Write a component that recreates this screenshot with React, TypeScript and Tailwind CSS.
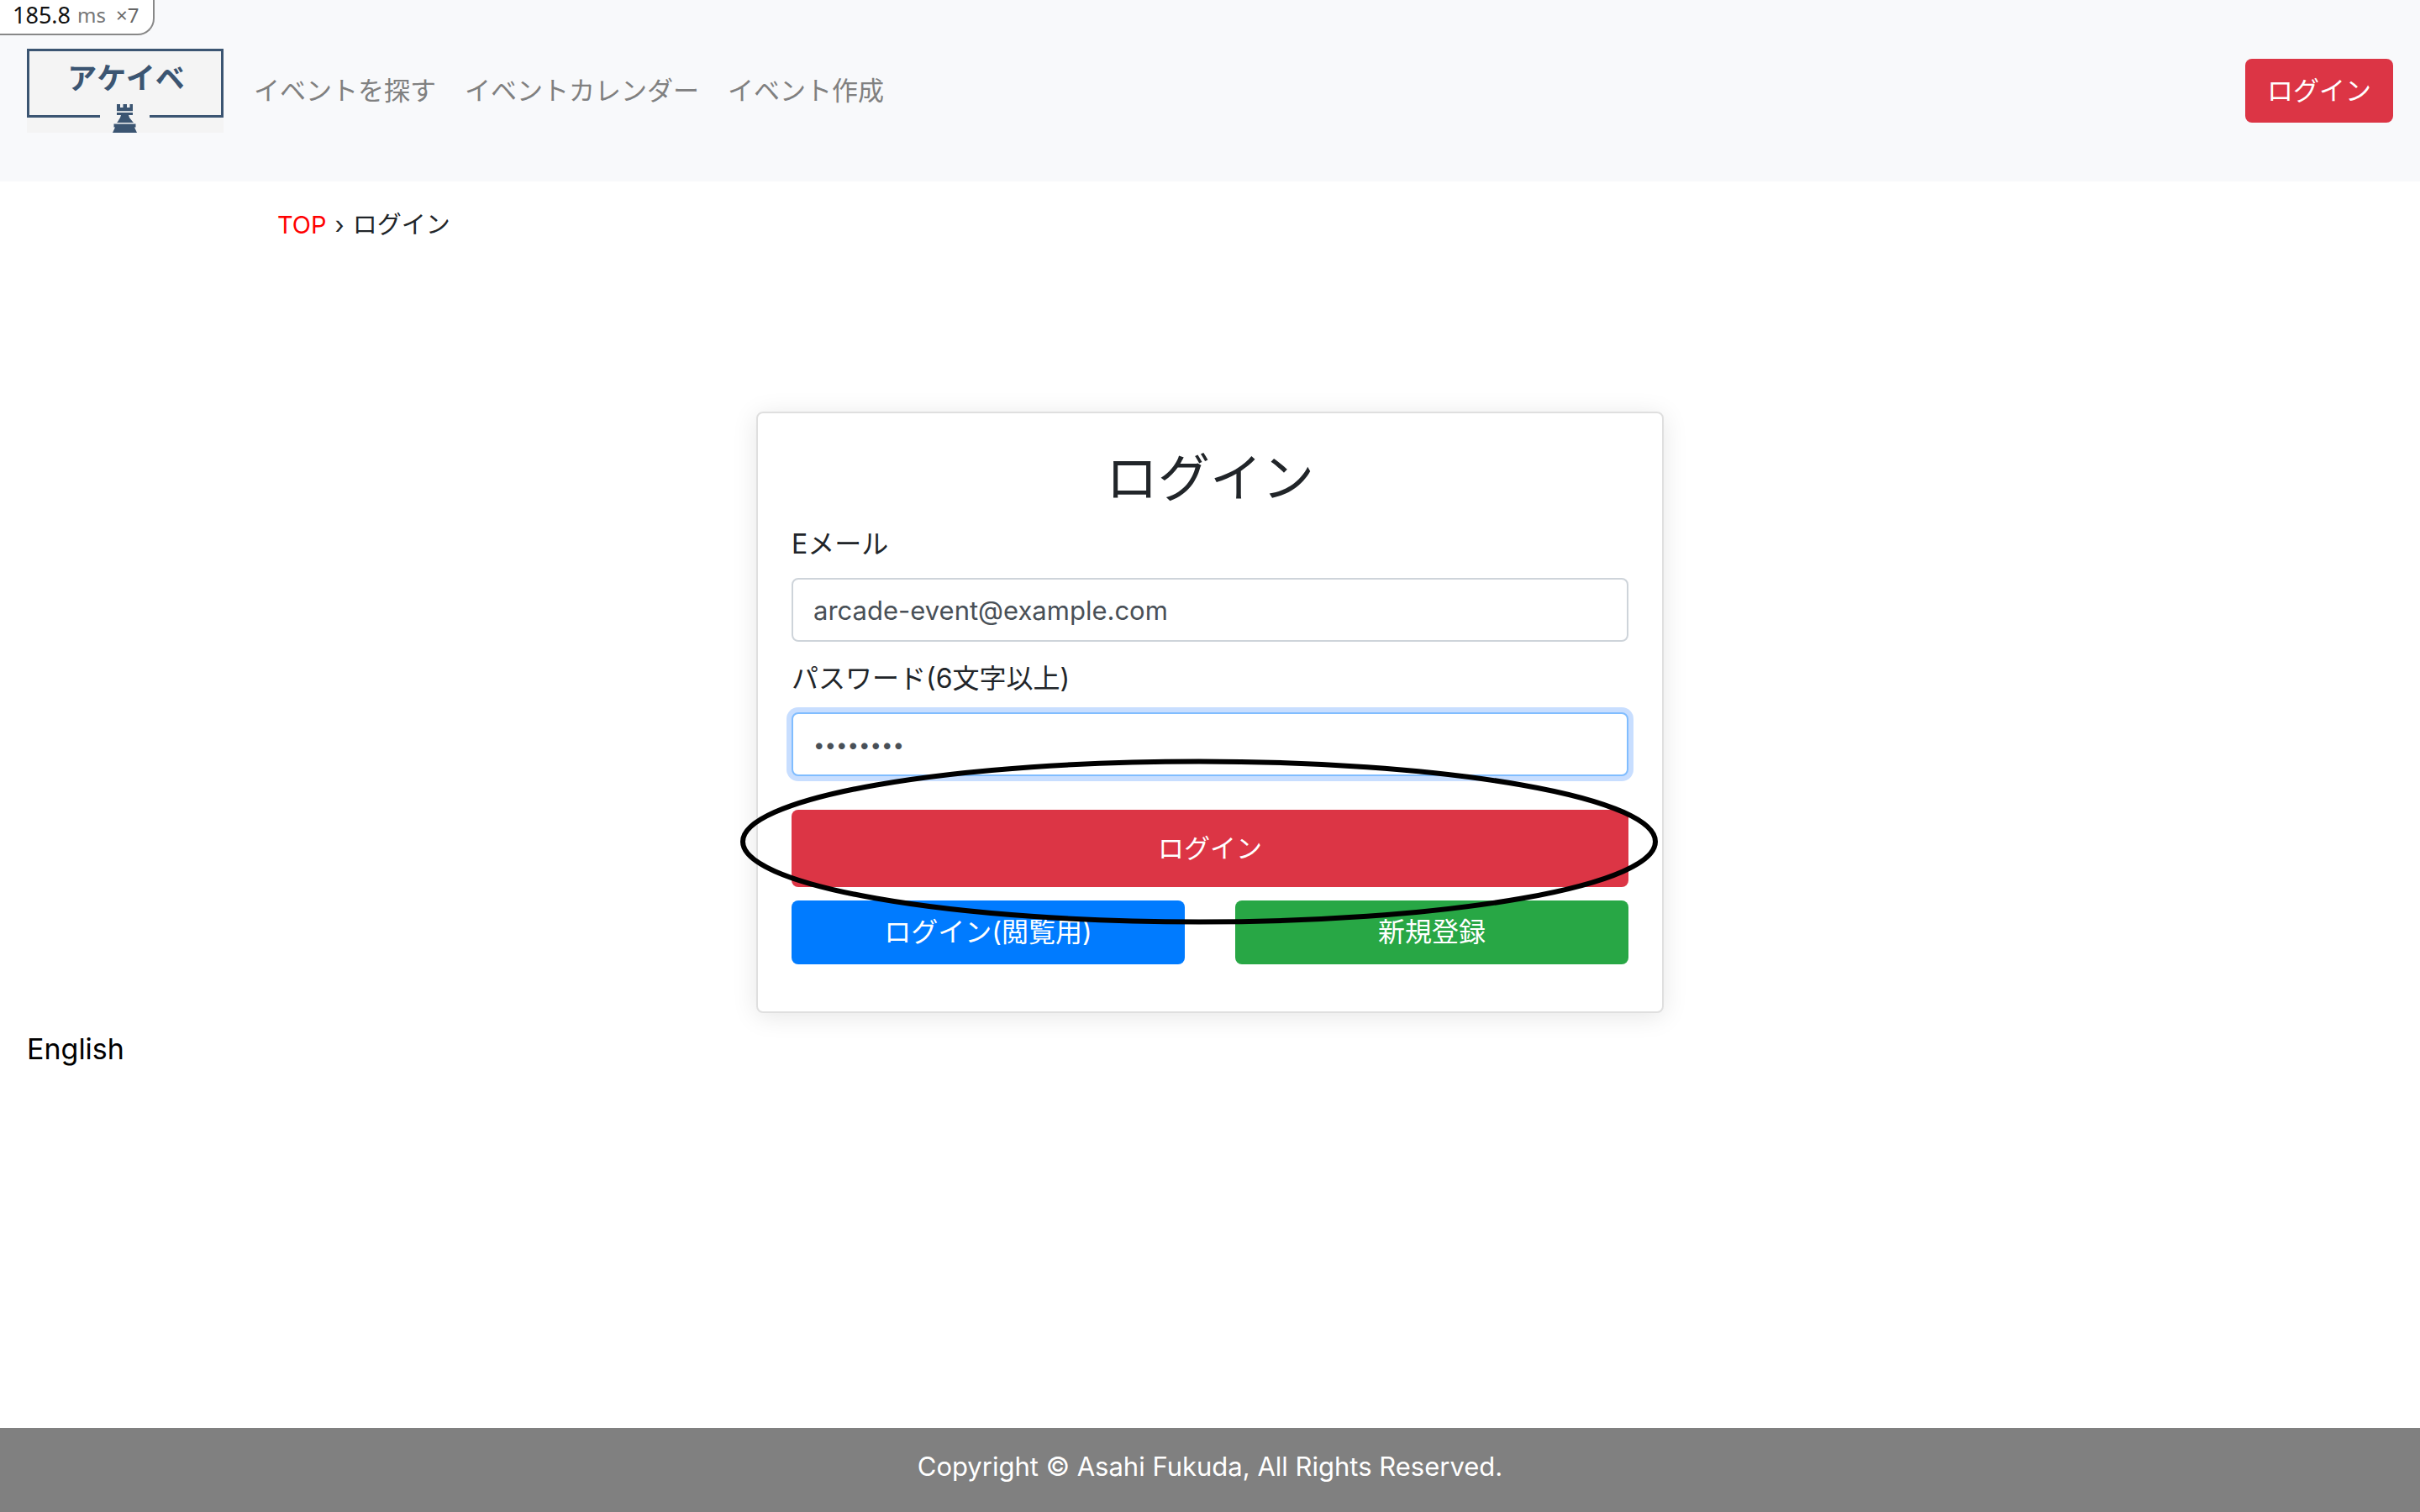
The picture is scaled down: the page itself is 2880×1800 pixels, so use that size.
const navLinks = ["イベントを探す", "イベントカレンダー", "イベント作成"];

function Logo() {
  return (
    <svg viewBox="0 0 234 100" className="h-[100px] w-[234px]" role="img" aria-label="アケイベ">
      <rect width="234" height="100" fill="#f4f4f4" />
      <path d="M87 80.500H1.500V1.500H232.500V80.500H146" fill="none" stroke="#3b5572" strokeWidth="3" />
      <text
        x="118"
        y="48"
        textAnchor="middle"
        fontSize="35"
        fontWeight="700"
        fill="#3b5572"
        fontFamily="'Noto Sans CJK JP', sans-serif"
      >
        アケイベ
      </text>
      <path
        d="M107 66h4v4h3.500v-4h4.500v4h3.500v-4h3.500v8.300h-19zM107 76h19v3h-19zM112 79h9l1 3 4 5 1 1h-20l1-1 3-5zM103.500 89.500h26v4h-26zM105 93.500h23l3 6.500h-29z"
        fill="#3b5572"
      />
    </svg>
  );
}

function ProfilerBadge() {
  return (
    <div className="absolute top-0 left-0 flex h-[42px] w-[184px] items-center rounded-br-[20px] border-r-2 border-b-2 border-[#888] bg-white pb-1 pl-[15px] font-['Noto_Sans'] whitespace-nowrap text-[#111]">
      <span className="text-[27px]">185.8</span>
      <span className="ml-2 text-[24px] text-[#777]">ms</span>
      <span className="ml-3 text-[24px] text-[#666]">×7</span>
    </div>
  );
}

export default function App() {
  return (
    <div className="relative flex min-h-screen flex-col bg-white font-['Inter','Noto_Sans_CJK_JP',sans-serif] text-[31px] leading-[48px] text-[#212529]">
      <ProfilerBadge />

      <header className="flex h-[216px] items-start justify-between bg-[#f8f9fb] px-8 pt-[58px]">
        <div className="flex items-center">
          <a href="#top">
            <Logo />
          </a>
          <nav className="ml-9 flex gap-[34px] text-[#808080]">
            {navLinks.map((label) => (
              <a key={label} href="#nav">
                {label}
              </a>
            ))}
          </nav>
        </div>
        <button className="mt-3 h-[76px] rounded-lg bg-[#dc3545] px-[26px] text-white">ログイン</button>
      </header>

      <main className="flex-1">
        <nav aria-label="breadcrumb" className="ml-[330px] pt-7 text-[29px]">
          <a href="#top" className="text-[#ff0000]">
            TOP
          </a>
          <span className="mx-[10px]">›</span>
          <span>ログイン</span>
        </nav>

        <section className="relative mx-auto mt-[198px] w-[1080px] rounded-lg border-2 border-[#dfdfdf] bg-white px-10 pt-10 pb-14 shadow-[0_4px_30px_rgba(0,0,0,0.1)]">
          <h1 className="text-center text-[62px] leading-[76px]">ログイン</h1>
          <form onSubmit={(event) => event.preventDefault()}>
            <label htmlFor="email" className="mt-4 block text-[32px]">
              Eメール
            </label>
            <input
              id="email"
              type="email"
              defaultValue="arcade-event@example.com"
              className="mt-4 block h-[76px] w-full rounded-lg border-2 border-[#ced4da] bg-white px-6 text-[#495057]"
            />
            <label htmlFor="password" className="mt-5 block text-[32px]">
              パスワード(6文字以上)
            </label>
            <input
              id="password"
              type="password"
              defaultValue="password"
              className="mt-4 block h-[76px] w-full rounded-lg border-2 border-[#80bdff] bg-white px-6 text-[24px] text-[#495057] shadow-[0_0_0_6px_#c8deff] outline-none"
            />
            <button type="submit" className="mt-10 block h-[92px] w-full rounded-lg bg-[#dc3545] text-white">
              ログイン
            </button>
            <div className="mt-4 grid grid-cols-2 gap-[60px] text-[32px] text-white">
              <button type="button" className="h-[76px] rounded-lg bg-[#007bff]">
                ログイン(閲覧用)
              </button>
              <button type="button" className="h-[76px] rounded-lg bg-[#28a745]">
                新規登録
              </button>
            </div>
          </form>
          <svg
            viewBox="0 0 1092 198"
            className="pointer-events-none absolute top-[411px] left-[-21px] h-[198px] w-[1092px]"
            aria-hidden="true"
          >
            <ellipse cx="546" cy="99" rx="543" ry="95.500" fill="none" stroke="#000" strokeWidth="6" />
          </svg>
        </section>

        <a href="#english" className="mt-4 ml-8 block w-fit text-[34px] leading-[54px] text-black">
          English
        </a>
      </main>

      <footer className="h-[100px] bg-[#808080] pt-[22px] text-center text-white">
        Copyright © Asahi Fukuda, All Rights Reserved.
      </footer>
    </div>
  );
}
